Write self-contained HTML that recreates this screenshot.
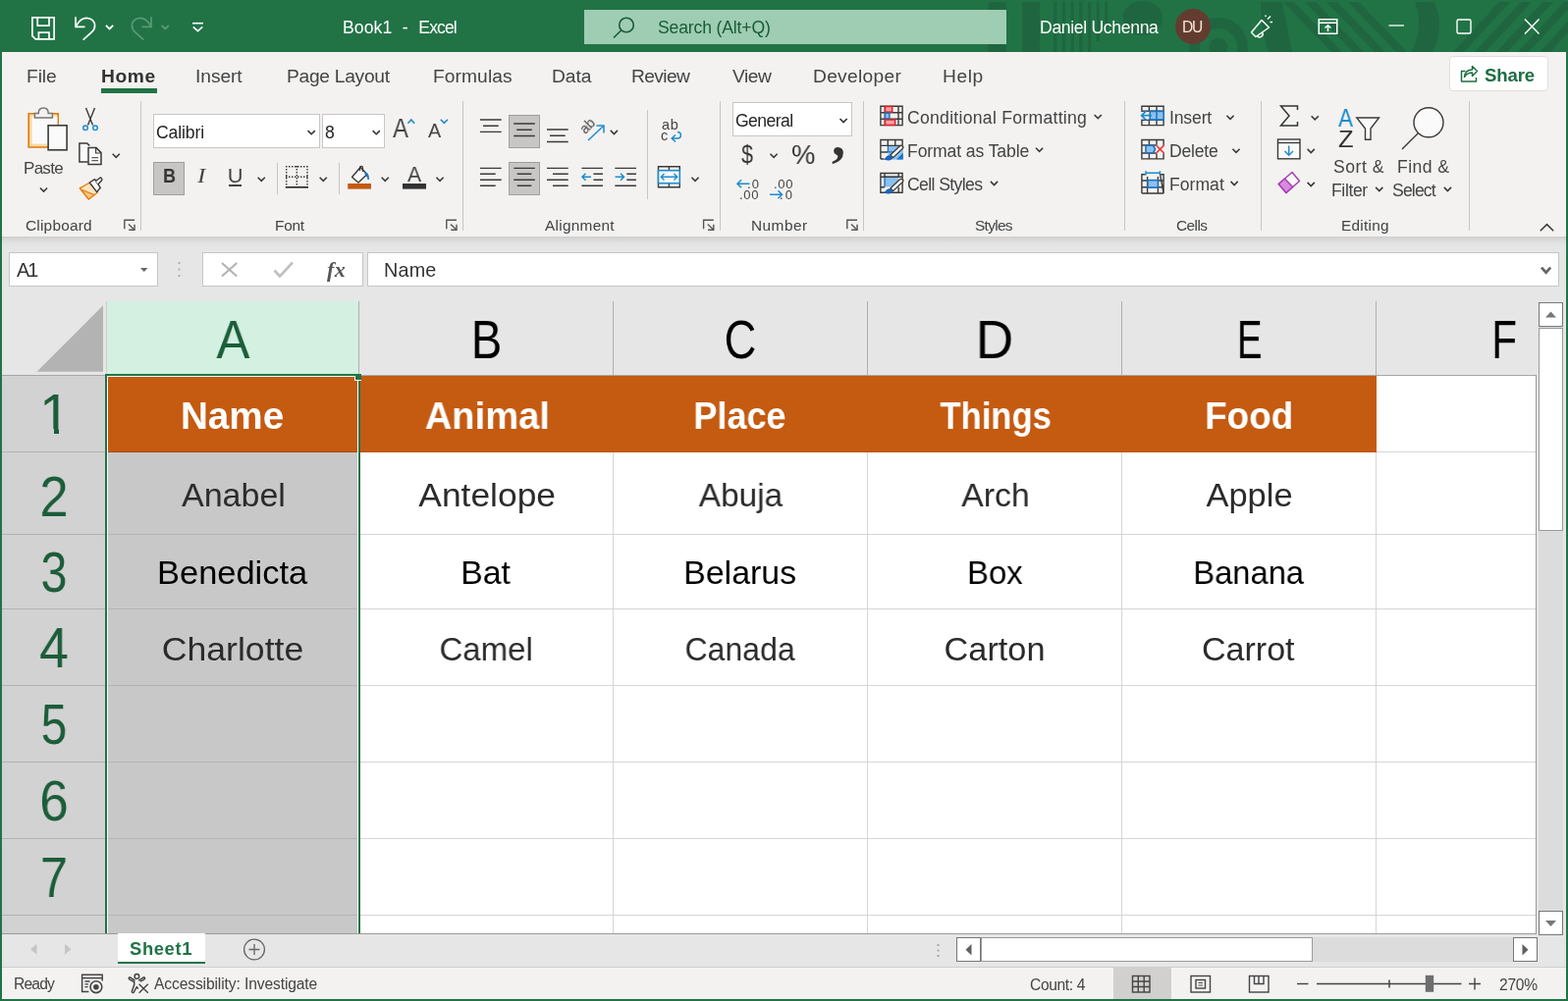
<!DOCTYPE html>
<html lang="en"><head><meta charset="utf-8"><title>Book1 - Excel</title>
<style>
html,body{margin:0;padding:0;}
body{width:1597px;height:1020px;overflow:hidden;position:relative;background:#fff;font-family:"Liberation Sans",sans-serif;}
#app{position:absolute;left:0;top:0;width:1597px;height:1020px;overflow:hidden;}
.b{position:absolute;}
.t{position:absolute;white-space:nowrap;display:block;will-change:transform;}
#icons{position:absolute;left:0;top:0;width:1597px;height:1020px;pointer-events:none;}
</style></head>
<body>
<div id="app">
<!-- part_title -->
<div class="b titlebar" style="left:0px;top:0px;width:1597px;height:53px;background:#217346;"></div>
<svg class="b" style="left:0;top:0" width="1597" height="53" viewBox="0 0 1597 53"><rect x="1006.5" y="2" width="18.5" height="51" fill="#1f6640"/><rect x="1041" y="2" width="18" height="51" fill="#1f6640"/><rect x="1073.1" y="2" width="3.4" height="51" fill="#1f6640"/><rect x="1081.8" y="2" width="3.4" height="51" fill="#1f6640"/><rect x="1090.5" y="2" width="3.4" height="51" fill="#1f6640"/><rect x="1099.2" y="2" width="3.4" height="51" fill="#1f6640"/><rect x="1107.9" y="2" width="3.4" height="51" fill="#1f6640"/><rect x="1116.6" y="2" width="3.3" height="40" fill="#1f6640"/><rect x="1125" y="2" width="3.3" height="31" fill="#1f6640"/><ellipse cx="1163.8" cy="18.5" rx="20.4" ry="17.5" fill="#1f6640"/><circle cx="1241" cy="48" r="24.5" fill="none" stroke="#1f6640" stroke-width="11"/><circle cx="1241" cy="48" r="9.5" fill="#1f6640"/><path d="M1284 2 H1306 L1316 53 H1292 C1286 38 1284 20 1284 2Z" fill="#1f6640"/><path d="M1307 2 L1318 2 L1367 53 L1356 53 Z" fill="#1f6640"/><path d="M1329 2 L1340 2 L1389 53 L1378 53 Z" fill="#1f6640"/><path d="M1351 2 L1362 2 L1411 53 L1400 53 Z" fill="#1f6640"/><path d="M1373 2 L1384 2 L1433 53 L1422 53 Z" fill="#1f6640"/><path d="M1441 2 C1447 18 1447 36 1437 53 L1459 53 C1468 36 1468 18 1461 2 Z" fill="#1f6640"/><path d="M1480 53 L1491 53 L1538 2 L1527 2 Z" fill="#1f6640"/><path d="M1502 53 L1513 53 L1560 2 L1549 2 Z" fill="#1f6640"/><path d="M1524 53 L1535 53 L1582 2 L1571 2 Z" fill="#1f6640"/><path d="M1546 53 L1557 53 L1604 2 L1593 2 Z" fill="#1f6640"/><path d="M1568 53 L1579 53 L1626 2 L1615 2 Z" fill="#1f6640"/></svg>
<div class="b search" style="left:595px;top:10px;width:430px;height:35px;background:#9fcdb3;"></div>
<span class="t" style="left:348.96px;top:16px;font-size:17.6px;line-height:24px;letter-spacing:0.1px;word-spacing:0.25px;white-space:pre;color:#fff;">Book1  -  <span style="letter-spacing:-0.9px;">Excel</span></span>
<span class="t" style="left:669.7px;top:16px;font-size:17.6px;line-height:24px;letter-spacing:-0.16px;color:#185c37;">Search (Alt+Q)</span>
<span class="t" style="left:1058.96px;top:16px;font-size:17.6px;line-height:24px;letter-spacing:-0.33px;color:#fff;">Daniel Uchenna</span>
<div class="b avatar" style="left:1197px;top:9px;width:36px;height:36px;background:#633c30;border-radius:50%;"></div>
<span class="t" style="left:1204.22px;top:17px;font-size:15.6px;line-height:21px;letter-spacing:-1.15px;color:#f5e6d8;">DU</span>
<!-- part_tabs -->
<div class="b ribbon" style="left:0px;top:53px;width:1597px;height:188px;background:#f3f2f1;"></div>
<span class="t tab" style="left:26.73px;top:65px;font-size:19.2px;line-height:25px;letter-spacing:-0.06px;color:#444;">File</span>
<span class="t tab" style="left:103.42px;top:65px;font-size:19.2px;line-height:25px;letter-spacing:0.61px;color:#333;font-weight:bold;">Home</span>
<span class="t tab" style="left:199.43px;top:65px;font-size:19.2px;line-height:25px;letter-spacing:-0.06px;color:#444;">Insert</span>
<span class="t tab" style="left:291.82px;top:65px;font-size:19.2px;line-height:25px;letter-spacing:-0.27px;color:#444;">Page Layout</span>
<span class="t tab" style="left:440.52px;top:65px;font-size:19.2px;line-height:25px;letter-spacing:0.09px;color:#444;">Formulas</span>
<span class="t tab" style="left:561.73px;top:65px;font-size:19.2px;line-height:25px;letter-spacing:-0.05px;color:#444;">Data</span>
<span class="t tab" style="left:642.92px;top:65px;font-size:19.2px;line-height:25px;letter-spacing:-0.6px;color:#444;">Review</span>
<span class="t tab" style="left:746.12px;top:65px;font-size:19.2px;line-height:25px;letter-spacing:-0.47px;color:#444;">View</span>
<span class="t tab" style="left:827.62px;top:65px;font-size:19.2px;line-height:25px;letter-spacing:0.29px;color:#444;">Developer</span>
<span class="t tab" style="left:959.73px;top:65px;font-size:19.2px;line-height:25px;letter-spacing:0.6px;color:#444;">Help</span>
<div class="b tabline" style="left:103px;top:90px;width:57px;height:5px;background:#217346;"></div>
<div class="b share" style="left:1476px;top:57px;width:101px;height:36px;background:#fff;border:1px solid #e1dfdd;border-radius:4px;box-sizing:border-box;"></div>
<span class="t" style="left:1511.96px;top:64px;font-size:18.6px;line-height:25px;letter-spacing:-0.15px;color:#1e6e42;font-weight:bold;">Share</span>
<!-- part_ribbon1 -->
<div class="b sep" style="left:143px;top:103px;width:1px;height:132px;background:#c8c6c4;"></div>
<div class="b sep" style="left:471px;top:103px;width:1px;height:132px;background:#c8c6c4;"></div>
<div class="b sep" style="left:733px;top:103px;width:1px;height:132px;background:#c8c6c4;"></div>
<div class="b sep" style="left:879px;top:103px;width:1px;height:132px;background:#c8c6c4;"></div>
<div class="b sep" style="left:1145px;top:103px;width:1px;height:132px;background:#c8c6c4;"></div>
<div class="b sep" style="left:1284px;top:103px;width:1px;height:132px;background:#c8c6c4;"></div>
<div class="b sep" style="left:1496px;top:103px;width:1px;height:132px;background:#c8c6c4;"></div>
<span class="t glabel" style="left:26.22px;top:219px;font-size:15.4px;line-height:21px;letter-spacing:0.22px;color:#444;">Clipboard</span>
<span class="t glabel" style="left:280.44px;top:219px;font-size:15.4px;line-height:21px;letter-spacing:-0.24px;color:#444;">Font</span>
<span class="t glabel" style="left:555.17px;top:219px;font-size:15.4px;line-height:21px;letter-spacing:0.27px;color:#444;">Alignment</span>
<span class="t glabel" style="left:765.04px;top:219px;font-size:15.4px;line-height:21px;letter-spacing:0.47px;color:#444;">Number</span>
<span class="t glabel" style="left:992.5px;top:219px;font-size:15.4px;line-height:21px;letter-spacing:-0.69px;color:#444;">Styles</span>
<span class="t glabel" style="left:1198.12px;top:219px;font-size:15.4px;line-height:21px;letter-spacing:-0.55px;color:#444;">Cells</span>
<span class="t glabel" style="left:1365.74px;top:219px;font-size:15.4px;line-height:21px;letter-spacing:0.27px;color:#444;">Editing</span>
<span class="t" style="left:24.31px;top:160px;font-size:17px;line-height:23px;letter-spacing:-0.71px;color:#444;">Paste</span>
<div class="b combo" style="left:156px;top:116px;width:170px;height:35px;background:#fff;border:1px solid #c8c6c4;box-sizing:border-box;"></div>
<div class="b combo" style="left:328px;top:116px;width:64px;height:35px;background:#fff;border:1px solid #c8c6c4;box-sizing:border-box;"></div>
<span class="t" style="left:159.11px;top:123px;font-size:17.6px;line-height:24px;letter-spacing:-0.13px;color:#262626;">Calibri</span>
<span class="t" style="left:330.94px;top:123px;font-size:17.6px;line-height:24px;color:#262626;">8</span>
<span class="t" style="left:399.65px;top:114px;font-size:27px;line-height:34px;transform:scaleX(0.888);transform-origin:0.05px 50%;color:#444;">A</span>
<span class="t" style="left:435.86px;top:120px;font-size:20px;line-height:26px;transform:scaleX(0.988);transform-origin:0.04px 50%;color:#444;">A</span>
<div class="b sel" style="left:156px;top:165.3px;width:32px;height:33.4px;background:#c8c6c4;border:1px solid #a19f9d;box-sizing:border-box;"></div>
<span class="t" style="left:165.5px;top:166px;font-size:19.4px;line-height:26px;transform:scaleX(0.921);transform-origin:1.3px 50%;color:#333;font-weight:bold;">B</span>
<span class="t" style="left:201.48px;top:165px;font-size:21px;line-height:28px;transform:scaleX(1.190);transform-origin:-0.08px 50%;color:#444;font-style:italic;font-family:'Liberation Serif',serif;">I</span>
<span class="t" style="left:231.6px;top:166px;font-size:19.4px;line-height:26px;transform:scaleX(1.125);transform-origin:1.5px 50%;color:#444;">U</span>
<div class="b" style="left:232.5px;top:188.2px;width:13.5px;height:1.5px;background:#444;"></div>
<div class="b sep" style="left:282px;top:166px;width:1px;height:32px;background:#c8c6c4;"></div>
<div class="b sep" style="left:345px;top:166px;width:1px;height:32px;background:#c8c6c4;"></div>
<span class="t" style="left:415.26px;top:162px;font-size:22.8px;line-height:30px;transform:scaleX(0.925);transform-origin:0.04px 50%;color:#444;">A</span>
<div class="b sel" style="left:518px;top:117.3px;width:32px;height:33.4px;background:#c8c6c4;border:1px solid #a19f9d;box-sizing:border-box;"></div>
<div class="b sel" style="left:518px;top:165.3px;width:32px;height:33.4px;background:#c8c6c4;border:1px solid #a19f9d;box-sizing:border-box;"></div>
<span class="t" style="left:587px;top:128px;font-size:14px;line-height:16px;color:#444;transform:rotate(-45deg);transform-origin:0 0;">ab</span>
<div class="b sep" style="left:659px;top:112px;width:1px;height:91px;background:#c8c6c4;"></div>
<span class="t" style="left:674.08px;top:117px;font-size:14.5px;line-height:20px;letter-spacing:0.78px;color:#444;">ab</span>
<span class="t" style="left:673.38px;top:128px;font-size:14.5px;line-height:20px;color:#444;">c</span>
<!-- part_ribbon2 -->
<div class="b combo" style="left:746.3px;top:104px;width:121.7px;height:34.5px;background:#fff;border:1px solid #c8c6c4;box-sizing:border-box;"></div>
<span class="t" style="left:749.01px;top:111px;font-size:17.6px;line-height:24px;letter-spacing:-0.56px;color:#262626;">General</span>
<span class="t" style="left:755.22px;top:140px;font-size:26px;line-height:34px;transform:scaleX(0.821);transform-origin:0.28px 50%;color:#333;">$</span>
<span class="t" style="left:805.58px;top:139px;font-size:28.5px;line-height:36px;transform:scaleX(0.961);transform-origin:1.02px 50%;color:#333;">%</span>
<span class="t" style="left:846.86px;top:106px;font-size:56px;line-height:66px;color:#333;font-weight:bold;font-family:'Liberation Serif',serif;">,</span>
<span class="t" style="left:761.01px;top:178px;font-size:13px;line-height:19px;letter-spacing:1.05px;color:#444;">.0</span>
<span class="t" style="left:753.01px;top:189px;font-size:13px;line-height:19px;letter-spacing:0.66px;color:#444;">.00</span>
<span class="t" style="left:787.51px;top:178px;font-size:13px;line-height:19px;letter-spacing:0.66px;color:#444;">.00</span>
<span class="t" style="left:794.01px;top:189px;font-size:13px;line-height:19px;letter-spacing:2.05px;color:#444;">.0</span>
<span class="t" style="left:924.41px;top:108px;font-size:17.6px;line-height:24px;letter-spacing:0.28px;color:#444;">Conditional Formatting</span>
<span class="t" style="left:923.86px;top:142px;font-size:17.6px;line-height:24px;letter-spacing:-0.11px;color:#444;">Format as Table</span>
<span class="t" style="left:924.41px;top:176px;font-size:17.6px;line-height:24px;letter-spacing:-0.6px;color:#444;">Cell Styles</span>
<span class="t" style="left:1190.58px;top:108px;font-size:17.6px;line-height:24px;letter-spacing:-0.15px;color:#444;">Insert</span>
<span class="t" style="left:1190.76px;top:142px;font-size:17.6px;line-height:24px;letter-spacing:-0.23px;color:#444;">Delete</span>
<span class="t" style="left:1190.76px;top:176px;font-size:17.6px;line-height:24px;letter-spacing:0.01px;color:#444;">Format</span>
<span class="t" style="left:1362.95px;top:104px;font-size:25.5px;line-height:32px;transform:scaleX(0.887);transform-origin:0.05px 50%;color:#1e8bcd;">A</span>
<span class="t" style="left:1362.72px;top:126px;font-size:24.5px;line-height:31px;transform:scaleX(1.043);transform-origin:0.78px 50%;color:#333;">Z</span>
<span class="t" style="left:1358.3px;top:158px;font-size:17.6px;line-height:24px;letter-spacing:0.5px;color:#444;">Sort &amp;</span>
<span class="t" style="left:1356.26px;top:182px;font-size:17.6px;line-height:24px;letter-spacing:-0.39px;color:#444;">Filter</span>
<span class="t" style="left:1422.76px;top:158px;font-size:17.6px;line-height:24px;letter-spacing:0.43px;color:#444;">Find &amp;</span>
<span class="t" style="left:1418.4px;top:182px;font-size:17.6px;line-height:24px;letter-spacing:-0.84px;color:#444;">Select</span>
<!-- part_grid -->
<div class="b fbar" style="left:0px;top:241px;width:1597px;height:66px;background:#e6e6e6;"></div>
<div class="b shadow" style="left:0px;top:241px;width:1597px;height:10px;background:linear-gradient(#cfcfcf,#dadada 35%,#e3e3e3 70%,#e6e6e6);"></div>
<div class="b namebox" style="left:9px;top:257px;width:152px;height:35px;background:#fff;border:1px solid #c6c6c6;box-sizing:border-box;"></div>
<span class="t" style="left:17.16px;top:262px;font-size:19.8px;line-height:26px;letter-spacing:-2px;color:#333;">A1</span>
<div class="b fxbox" style="left:206px;top:257px;width:164px;height:35px;background:#fff;border:1px solid #c6c6c6;box-sizing:border-box;"></div>
<span class="t" style="left:332.7px;top:260px;font-size:22px;line-height:29px;letter-spacing:0.41px;color:#555;font-weight:bold;font-style:italic;font-family:'Liberation Serif',serif;">fx</span>
<div class="b finput" style="left:374px;top:257px;width:1214px;height:35px;background:#fff;border:1px solid #c6c6c6;box-sizing:border-box;"></div>
<span class="t" style="left:391.28px;top:262px;font-size:19.8px;line-height:26px;letter-spacing:0.17px;color:#333;">Name</span>
<div class="b grid" style="left:2px;top:307px;width:1563px;height:645px;background:#fff;"></div>
<div class="b colhdr" style="left:2px;top:307px;width:1563px;height:75px;background:#e6e6e6;"></div>
<div class="b colsel" style="left:109px;top:307px;width:256px;height:74px;background:#d3f0e0;"></div>
<div class="b" style="left:2px;top:382px;width:1563px;height:1px;background:#a6a6a6;"></div>
<div class="b" style="left:365px;top:307px;width:1px;height:75px;background:#b0b0b0;"></div>
<div class="b" style="left:624px;top:307px;width:1px;height:75px;background:#b0b0b0;"></div>
<div class="b" style="left:883px;top:307px;width:1px;height:75px;background:#b0b0b0;"></div>
<div class="b" style="left:1142px;top:307px;width:1px;height:75px;background:#b0b0b0;"></div>
<div class="b" style="left:1401px;top:307px;width:1px;height:75px;background:#b0b0b0;"></div>
<div class="b" style="left:108px;top:307px;width:1px;height:75px;background:#cfcfcf;"></div>
<div class="b rowhdr" style="left:2px;top:383px;width:105px;height:568px;background:#d2d2d2;"></div>
<div class="b" style="left:2px;top:460px;width:105px;height:1px;background:#b2b2b2;"></div>
<div class="b" style="left:2px;top:544px;width:105px;height:1px;background:#b2b2b2;"></div>
<div class="b" style="left:2px;top:620px;width:105px;height:1px;background:#b2b2b2;"></div>
<div class="b" style="left:2px;top:698px;width:105px;height:1px;background:#b2b2b2;"></div>
<div class="b" style="left:2px;top:776px;width:105px;height:1px;background:#b2b2b2;"></div>
<div class="b" style="left:2px;top:854px;width:105px;height:1px;background:#b2b2b2;"></div>
<div class="b" style="left:2px;top:932px;width:105px;height:1px;background:#b2b2b2;"></div>
<div class="b orange" style="left:109px;top:383px;width:1293px;height:78px;background:#c55a11;"></div>
<div class="b" style="left:109px;top:460px;width:1293px;height:1px;background:#bd540d;"></div>
<div class="b" style="left:110px;top:460px;width:254px;height:1px;background:#a84806;"></div>
<div class="b selcol" style="left:109px;top:461px;width:256px;height:490px;background:#c8c8c8;"></div>
<div class="b" style="left:367px;top:544px;width:1197px;height:1px;background:#d6d6d6;"></div>
<div class="b" style="left:110px;top:544px;width:254px;height:1px;background:#b4b4b4;"></div>
<div class="b" style="left:367px;top:620px;width:1197px;height:1px;background:#d6d6d6;"></div>
<div class="b" style="left:110px;top:620px;width:254px;height:1px;background:#b4b4b4;"></div>
<div class="b" style="left:367px;top:698px;width:1197px;height:1px;background:#d6d6d6;"></div>
<div class="b" style="left:110px;top:698px;width:254px;height:1px;background:#b4b4b4;"></div>
<div class="b" style="left:367px;top:776px;width:1197px;height:1px;background:#d6d6d6;"></div>
<div class="b" style="left:110px;top:776px;width:254px;height:1px;background:#b4b4b4;"></div>
<div class="b" style="left:367px;top:854px;width:1197px;height:1px;background:#d6d6d6;"></div>
<div class="b" style="left:110px;top:854px;width:254px;height:1px;background:#b4b4b4;"></div>
<div class="b" style="left:367px;top:932px;width:1197px;height:1px;background:#d6d6d6;"></div>
<div class="b" style="left:110px;top:932px;width:254px;height:1px;background:#b4b4b4;"></div>
<div class="b" style="left:624px;top:461px;width:1px;height:490px;background:#d6d6d6;"></div>
<div class="b" style="left:883px;top:461px;width:1px;height:490px;background:#d6d6d6;"></div>
<div class="b" style="left:1142px;top:461px;width:1px;height:490px;background:#d6d6d6;"></div>
<div class="b" style="left:1401px;top:461px;width:1px;height:490px;background:#d6d6d6;"></div>
<div class="b" style="left:1402px;top:460px;width:162px;height:1px;background:#d6d6d6;"></div>
<div class="b" style="left:1564px;top:382px;width:1px;height:570px;background:#9a9a9a;"></div>
<div class="b" style="left:107px;top:381px;width:2px;height:570px;background:#217346;"></div>
<div class="b" style="left:365px;top:381px;width:2px;height:570px;background:#217346;"></div>
<div class="b" style="left:107px;top:381px;width:260px;height:2px;background:#217346;"></div>
<div class="b" style="left:109px;top:383px;width:256px;height:1px;background:#fff;"></div>
<div class="b" style="left:109px;top:383px;width:1px;height:568px;background:#fff;"></div>
<div class="b" style="left:364px;top:383px;width:1px;height:568px;background:#fff;"></div>
<div class="b" style="left:361px;top:381px;width:7px;height:7px;background:#fff;"></div>
<div class="b" style="left:362px;top:381px;width:6px;height:6px;background:#217346;"></div>
<div class="b" style="left:361px;top:381px;width:1px;height:2px;background:#217346;"></div>
<span class="t" style="left:218.99px;top:313px;font-size:55.2px;line-height:66px;transform:scaleX(0.9236);transform-origin:18.41px 50%;color:#1c5d3a;">A</span>
<span class="t" style="left:477.49px;top:313px;font-size:55.2px;line-height:66px;transform:scaleX(0.8511);transform-origin:19.21px 50%;color:#000;">B</span>
<span class="t" style="left:734.42px;top:313px;font-size:55.2px;line-height:66px;transform:scaleX(0.8182);transform-origin:20.28px 50%;color:#000;">C</span>
<span class="t" style="left:993.38px;top:313px;font-size:55.2px;line-height:66px;transform:scaleX(0.9636);transform-origin:20.87px 50%;color:#000;">D</span>
<span class="t" style="left:1254.32px;top:313px;font-size:55.2px;line-height:66px;transform:scaleX(0.6954);transform-origin:19.48px 50%;color:#000;">E</span>
<span class="t" style="left:1514.53px;top:313px;font-size:55.2px;line-height:66px;transform:scaleX(0.7598);transform-origin:18.02px 50%;color:#000;">F</span>
<span class="t" style="left:40.47px;top:388px;font-size:57px;line-height:68px;transform:scaleX(1.0000);transform-origin:16.63px 50%;color:#1c5d3a;">1</span>
<div class="b" style="left:44px;top:437px;width:11px;height:6px;background:#d2d2d2;"></div>
<div class="b" style="left:60.4px;top:437px;width:11.6px;height:6px;background:#d2d2d2;"></div>
<span class="t" style="left:38.61px;top:472px;font-size:57.5px;line-height:68px;transform:scaleX(0.9084);transform-origin:15.99px 50%;color:#1c5d3a;">2</span>
<span class="t" style="left:39.08px;top:549px;font-size:57.5px;line-height:68px;transform:scaleX(0.8362);transform-origin:15.82px 50%;color:#1c5d3a;">3</span>
<span class="t" style="left:38.69px;top:626px;font-size:57.5px;line-height:68px;transform:scaleX(0.9317);transform-origin:15.81px 50%;color:#1c5d3a;">4</span>
<span class="t" style="left:39.31px;top:704px;font-size:57.5px;line-height:68px;transform:scaleX(0.8252);transform-origin:15.94px 50%;color:#1c5d3a;">5</span>
<span class="t" style="left:39.06px;top:782px;font-size:57.5px;line-height:68px;transform:scaleX(0.9232);transform-origin:16.19px 50%;color:#1c5d3a;">6</span>
<span class="t" style="left:38.98px;top:860px;font-size:57.5px;line-height:68px;transform:scaleX(0.8797);transform-origin:16.02px 50%;color:#1c5d3a;">7</span>
<span class="t" style="left:183.73px;top:400px;font-size:38.6px;line-height:47px;transform:scaleX(1.0022);transform-origin:53.17px 50%;color:#fff;font-weight:bold;">Name</span>
<span class="t" style="left:431.62px;top:400px;font-size:38.6px;line-height:47px;transform:scaleX(0.9885);transform-origin:63.43px 50%;color:#fff;font-weight:bold;">Animal</span>
<span class="t" style="left:703.4px;top:400px;font-size:38.6px;line-height:47px;transform:scaleX(0.9337);transform-origin:51.05px 50%;color:#fff;font-weight:bold;">Place</span>
<span class="t" style="left:950.51px;top:400px;font-size:38.6px;line-height:47px;transform:scaleX(0.8962);transform-origin:62.64px 50%;color:#fff;font-weight:bold;">Things</span>
<span class="t" style="left:1225.35px;top:400px;font-size:38.6px;line-height:47px;transform:scaleX(0.9536);transform-origin:47.15px 50%;color:#fff;font-weight:bold;">Food</span>
<span class="t" style="left:184.62px;top:483px;font-size:34px;line-height:42px;transform:scaleX(0.9997);transform-origin:51.83px 50%;color:#2b2b2b;">Anabel</span>
<span class="t" style="left:428.55px;top:483px;font-size:34px;line-height:42px;transform:scaleX(1.0410);transform-origin:66.4px 50%;color:#2b2b2b;">Antelope</span>
<span class="t" style="left:710.68px;top:483px;font-size:34px;line-height:42px;transform:scaleX(0.9827);transform-origin:43.52px 50%;color:#2b2b2b;">Abuja</span>
<span class="t" style="left:979.11px;top:483px;font-size:34px;line-height:42px;transform:scaleX(0.9934);transform-origin:33.89px 50%;color:#2b2b2b;">Arch</span>
<span class="t" style="left:1228.99px;top:483px;font-size:34px;line-height:42px;transform:scaleX(1.0130);transform-origin:42.76px 50%;color:#2b2b2b;">Apple</span>
<span class="t" style="left:160.64px;top:562px;font-size:34px;line-height:42px;transform:scaleX(1.0125);transform-origin:77.01px 50%;color:#000;">Benedicta</span>
<span class="t" style="left:468.56px;top:562px;font-size:34px;line-height:42px;transform:scaleX(0.9936);transform-origin:26.79px 50%;color:#000;">Bat</span>
<span class="t" style="left:696.28px;top:562px;font-size:34px;line-height:42px;transform:scaleX(0.9976);transform-origin:58.42px 50%;color:#000;">Belarus</span>
<span class="t" style="left:983.69px;top:562px;font-size:34px;line-height:42px;transform:scaleX(0.9668);transform-origin:30.51px 50%;color:#000;">Box</span>
<span class="t" style="left:1212.64px;top:562px;font-size:34px;line-height:42px;transform:scaleX(0.9620);transform-origin:60.01px 50%;color:#000;">Banana</span>
<span class="t" style="left:168.36px;top:640px;font-size:34px;line-height:42px;transform:scaleX(1.0473);transform-origin:69.09px 50%;color:#2b2b2b;">Charlotte</span>
<span class="t" style="left:446.15px;top:640px;font-size:34px;line-height:42px;transform:scaleX(0.9698);transform-origin:48.85px 50%;color:#2b2b2b;">Camel</span>
<span class="t" style="left:693.73px;top:640px;font-size:34px;line-height:42px;transform:scaleX(0.9414);transform-origin:60.42px 50%;color:#2b2b2b;">Canada</span>
<span class="t" style="left:961.96px;top:640px;font-size:34px;line-height:42px;transform:scaleX(1.0079);transform-origin:50.79px 50%;color:#2b2b2b;">Carton</span>
<span class="t" style="left:1224.48px;top:640px;font-size:34px;line-height:42px;transform:scaleX(1.0022);transform-origin:47.97px 50%;color:#2b2b2b;">Carrot</span>
<!-- part_status -->
<div class="b tabbar" style="left:0px;top:952px;width:1597px;height:34px;background:#e6e6e6;"></div>
<div class="b" style="left:2px;top:951px;width:1563px;height:1px;background:#9a9a9a;"></div>
<div class="b" style="left:0px;top:985px;width:1597px;height:1px;background:#cfcfcf;"></div>
<div class="b status" style="left:0px;top:986px;width:1597px;height:34px;background:#f3f2f1;"></div>
<div class="b vscroll" style="left:1565px;top:300px;width:30px;height:655px;background:#e6e6e6;"></div>
<div class="b" style="left:1567px;top:333px;width:25px;height:595px;background:#dcdcdc;"></div>
<div class="b" style="left:1567px;top:308px;width:25px;height:25px;background:#fff;border:1px solid #777;box-sizing:border-box;"></div>
<div class="b" style="left:1567px;top:928px;width:25px;height:25px;background:#fff;border:1px solid #777;box-sizing:border-box;"></div>
<div class="b" style="left:1567px;top:334px;width:25px;height:207px;background:#fff;border:1px solid #9a9a9a;box-sizing:border-box;"></div>
<div class="b sheettab" style="left:120px;top:951px;width:89px;height:29px;background:#fff;"></div>
<div class="b" style="left:120px;top:980px;width:89px;height:2px;background:#217346;"></div>
<span class="t" style="left:131.97px;top:954px;font-size:18.4px;line-height:25px;letter-spacing:0.63px;color:#217346;font-weight:bold;">Sheet1</span>
<div class="b" style="left:974px;top:955px;width:592px;height:25px;background:#dcdcdc;"></div>
<div class="b" style="left:974px;top:955px;width:25px;height:25px;background:#fff;border:1px solid #777;box-sizing:border-box;"></div>
<div class="b" style="left:999px;top:955px;width:338px;height:25px;background:#fff;border:1px solid #9a9a9a;box-sizing:border-box;"></div>
<div class="b" style="left:1541px;top:955px;width:25px;height:25px;background:#fff;border:1px solid #777;box-sizing:border-box;"></div>
<span class="t" style="left:13.62px;top:992px;font-size:15.6px;line-height:21px;letter-spacing:-0.82px;color:#444;">Ready</span>
<span class="t" style="left:157.27px;top:992px;font-size:15.6px;line-height:21px;letter-spacing:-0.11px;color:#444;">Accessibility: Investigate</span>
<span class="t" style="left:1049.41px;top:993px;font-size:15.6px;line-height:21px;letter-spacing:-0.36px;color:#444;">Count: 4</span>
<div class="b viewsel" style="left:1133.5px;top:986px;width:59.5px;height:32px;background:#d2d0ce;"></div>
<span class="t" style="left:1527.42px;top:993px;font-size:15.6px;line-height:21px;letter-spacing:-0.28px;color:#444;">270%</span>
<div class="b" style="left:0px;top:53px;width:2px;height:967px;background:#217346;"></div>
<div class="b" style="left:1595px;top:53px;width:2px;height:967px;background:#217346;"></div>
<div class="b" style="left:0px;top:1018px;width:1597px;height:2px;background:#217346;"></div>
<svg id="icons" width="1597" height="1020" viewBox="0 0 1597 1020">
<defs><clipPath id="tbclip"><rect x="0" y="0" width="1597" height="53"/></clipPath></defs>
<!-- part_title -->
<g fill="none" stroke="#fff" stroke-width="1.7"><path d="M32.9 17.9H55.1V39.9H36.2L32.9 36.6Z"/><path d="M38.2 17.9V26.2H50V17.9"/><path d="M39.4 39.9V33.2H50V39.9"/></g>
<g fill="none" stroke="#fff" stroke-width="1.7"><path d="M77 17.2V27.4H86.5"/><path d="M77.6 26.6C80 21.5 83.8 18.3 88.3 18.3C93.2 18.3 96.6 21.8 96.6 26.2C96.6 29 95.4 31 93 33.2L84.6 40.6"/></g>
<path d="M107.95 25.8L111.55 29.4L115.15 25.8" fill="none" stroke="#fff" stroke-width="1.8"/>
<g fill="none" stroke="#5a9a78" stroke-width="1.7"><path d="M154 17.2V27.4H144.5"/><path d="M153.4 26.6C151 21.5 147.2 18.3 142.7 18.3C137.8 18.3 134.4 21.8 134.4 26.2C134.4 29 135.6 31 138 33.2L146.4 40.6"/></g>
<path d="M164.65 25.8L168.25 29.4L171.85 25.8" fill="none" stroke="#5a9a78" stroke-width="1.8"/>
<path d="M196 23.7H207" stroke="#fff" stroke-width="1.6"/>
<path d="M196.8 27.4L201.5 31.6L206.2 27.4" fill="none" stroke="#fff" stroke-width="1.7"/>
<g fill="none" stroke="#185c37" stroke-width="1.6"><circle cx="638" cy="25.5" r="7.3"/><path d="M632.8 30.8L625 38.5"/></g>
<g fill="none" stroke="#fff" stroke-width="1.5" stroke-linejoin="round"><path d="M1285 20.5L1292.5 28L1279 37.5L1274.5 33Z"/><path d="M1280.5 36.5A3 3 0 0 0 1285.5 33"/><path d="M1291 19.5L1294 16.5M1289 17V15.5M1293.5 22.5H1296"/></g>
<g fill="none" stroke="#fff" stroke-width="1.5"><rect x="1343.25" y="19.75" width="18.5" height="14.5"/><path d="M1343 23.25H1362"/><path d="M1352.5 32V26M1349.5 28.5L1352.5 25.8L1355.5 28.5"/></g>
<path d="M1414.5 26H1430" stroke="#fff" stroke-width="1.3"/>
<rect x="1484" y="20" width="14" height="14" rx="1.5" fill="none" stroke="#fff" stroke-width="1.4"/>
<path d="M1553 19.5L1567.5 34.5M1567.5 19.5L1553 34.5" stroke="#fff" stroke-width="1.4" fill="none"/>
<!-- part_tabs -->
<g fill="none" stroke="#1e6e42" stroke-width="1.5" stroke-linejoin="round"><path d="M1492.5 72.5H1488.5V83H1503.5V79"/><path d="M1491.5 78.5C1492 73.5 1495 71 1499.5 71V67.5L1504.5 72.5L1499.5 77.5V74C1496 74 1493.5 75.5 1491.5 78.5Z"/></g>
<!-- part_ribbon1 -->
<g fill="none" stroke="#555" stroke-width="1.4"><path d="M126.8 233.3V224.3H137"/><path d="M131 228.5L136.8 234.1"/><path d="M131.2 234.3H137V228.7"/></g>
<g fill="none" stroke="#555" stroke-width="1.4"><path d="M454.8 233.3V224.3H465"/><path d="M459 228.5L464.8 234.1"/><path d="M459.2 234.3H465V228.7"/></g>
<g fill="none" stroke="#555" stroke-width="1.4"><path d="M716.6 233.3V224.3H726.8"/><path d="M720.8 228.5L726.6 234.1"/><path d="M721 234.3H726.8V228.7"/></g>
<g fill="none" stroke="#555" stroke-width="1.4"><path d="M862.8 233.3V224.3H873"/><path d="M867 228.5L872.8 234.1"/><path d="M867.2 234.3H873V228.7"/></g>
<path d="M1568.8 235.3L1575.5 228.6L1582.2 235.3" fill="none" stroke="#3b3a39" stroke-width="1.5"/>
<g><path d="M29.2 115.8H59.2V150H29.2Z" fill="#fcdca4" stroke="#e3780c" stroke-width="1.6"/><path d="M32.6 118.6H58.4V146.6H32.6Z" fill="#fafafa"/><path d="M35.4 120V115.4H39.2C39.2 112 41 110 44.2 110C47.4 110 49.2 112 49.2 115.4H53.4V120Z" fill="#f3f2f1" stroke="#797775" stroke-width="1.5"/><rect x="49.1" y="127.8" width="19" height="25" fill="#fafafa" stroke="#3b3a39" stroke-width="1.6"/></g>
<path d="M40.9 191.5L44.5 195.1L48.1 191.5" fill="none" stroke="#3b3a39" stroke-width="1.6"/>
<g fill="none" stroke-width="1.4"><path d="M87.5 110L94.5 127.5M96.5 110L89.5 127.5" stroke="#3b3a39"/><circle cx="87" cy="130.2" r="2.3" stroke="#1e8bcd" stroke-width="1.5"/><circle cx="97" cy="130.2" r="2.3" stroke="#1e8bcd" stroke-width="1.5"/></g>
<g fill="#fafafa" stroke="#3b3a39" stroke-width="1.5"><path d="M89.5 165H80.9V145.9H88.6L91.2 148.4"/><path d="M90 150.6H98L103 155.6V167.6H90Z"/><path d="M97.6 150.8V156H102.8" fill="none" stroke-width="1.2"/><path d="M93.4 160.6H100M93.4 163.6H100" stroke="#605e5c" stroke-width="1.2"/></g>
<path d="M114.65 156.7L118.25 160.3L121.85 156.7" fill="none" stroke="#3b3a39" stroke-width="1.6"/>
<g stroke-width="1.4" stroke-linejoin="round"><path d="M81.2 191.8L91.5 186L99.5 196L90.3 203Z" fill="#fbe3c0" stroke="#e67e0e"/><path d="M83 193.3L96 198.6L90.3 203Z" fill="#f7c887" stroke="#e67e0e" stroke-width="1.2"/><path d="M91.2 186L96.5 182.7L102.3 191.3L98.6 195.6Z" fill="#f9f9f9" stroke="#3b3a39"/><path d="M97.5 184.5L101.8 181.2C103 180.5 104.6 182.8 103.6 183.8L100 187.8" fill="#f9f9f9" stroke="#3b3a39"/></g>
<path d="M313.55 133.1L317.15 136.7L320.75 133.1" fill="none" stroke="#333" stroke-width="1.6"/>
<path d="M379.65 133.1L383.25 136.7L386.85 133.1" fill="none" stroke="#333" stroke-width="1.6"/>
<path d="M415.4 125.8L418.8 122L422.2 125.8" fill="none" stroke="#1e8bcd" stroke-width="1.6"/>
<path d="M448.8 121.8L452.4 125.4L456 121.8" fill="none" stroke="#1e8bcd" stroke-width="1.6"/>
<path d="M262.65 180.7L266.25 184.3L269.85 180.7" fill="none" stroke="#3b3a39" stroke-width="1.6"/>
<g fill="none" stroke="#3b3a39"><path d="M291 169.7H313.5M291 180.3H313.5M291.7 169V190M302.3 169V190M313 169V190" stroke-width="1.4" stroke-dasharray="1.5 1.5"/><path d="M290.8 190.8H314" stroke-width="1.6" stroke="#222"/></g>
<path d="M325.65 180.7L329.25 184.3L332.85 180.7" fill="none" stroke="#3b3a39" stroke-width="1.6"/>
<g fill="none" stroke-linejoin="round"><path d="M358.5 180.5L367 170.5L374 177.5L365 186Z" stroke="#3b3a39" stroke-width="1.4" fill="#f9f9f9"/><path d="M366.5 174V171C366.5 169 369.5 169 369.5 171V175" stroke="#3b3a39" stroke-width="1.3"/><path d="M372 175.5C374.5 176.5 376 179.5 375.2 183C374.5 180.5 373.5 179 372 178Z" fill="#1e73be" stroke="#1e73be" stroke-width="1"/><rect x="354.2" y="187" width="23.8" height="5.6" fill="#c55a11"/></g>
<path d="M388.65 180.7L392.25 184.3L395.85 180.7" fill="none" stroke="#3b3a39" stroke-width="1.6"/>
<rect x="410" y="187" width="24" height="5.6" fill="#333"/>
<path d="M444.45 180.7L448.05 184.3L451.65 180.7" fill="none" stroke="#3b3a39" stroke-width="1.6"/>
<path d="M489 122H510.7M492 128.2H507.7M489 134.4H510.7" stroke="#3b3a39" stroke-width="1.4" fill="none"/>
<path d="M523.2 126H544.8M526.2 132.3H541.8M523.2 138.5H544.8" stroke="#3b3a39" stroke-width="1.4" fill="none"/>
<path d="M557 132H578.7M560 138.2H575.7M557 144.5H578.7" stroke="#3b3a39" stroke-width="1.4" fill="none"/>
<g fill="none" stroke="#1e8bcd" stroke-width="1.5"><path d="M599 143L614.5 128.5"/><path d="M607.5 128H615V135.5"/></g>
<path d="M621.8 132.9L625.4 136.5L629 132.9" fill="none" stroke="#3b3a39" stroke-width="1.6"/>
<path d="M489 171.4H510.7M489 177.2H504.7M489 183.2H510.7M489 189.2H504.7" stroke="#3b3a39" stroke-width="1.4" fill="none"/>
<path d="M523.2 171.4H544.8M526.7 177.2H541.3M523.2 183.2H544.8M526.7 189.2H541.3" stroke="#3b3a39" stroke-width="1.4" fill="none"/>
<path d="M557 171.4H578.7M563 177.2H578.7M557 183.2H578.7M563 189.2H578.7" stroke="#3b3a39" stroke-width="1.4" fill="none"/>
<path d="M592.4 171.4H614M604.4 177.2H614M604.4 183.2H614M592.4 189.2H614" stroke="#3b3a39" stroke-width="1.4" fill="none"/>
<path d="M593 180.2H602M596.5 176.7L593 180.2L596.5 183.7" fill="none" stroke="#1e8bcd" stroke-width="1.5"/>
<path d="M626.3 171.4H648M638.3 177.2H648M638.3 183.2H648M626.3 189.2H648" stroke="#3b3a39" stroke-width="1.4" fill="none"/>
<path d="M626.5 180.2H635.5M632 176.7L635.5 180.2L632 183.7" fill="none" stroke="#1e8bcd" stroke-width="1.5"/>
<path d="M690 134.5C694.5 134.5 694.5 141 690 141H684.5M688 137.5L684.2 141L688 144.5" fill="none" stroke="#1e8bcd" stroke-width="1.5"/>
<g fill="none"><path d="M670.5 169.7H692.3V190.8H670.5ZM681.4 169.7V173.5M681.4 187V190.8" stroke="#3b3a39" stroke-width="1.4"/><rect x="670.5" y="173.7" width="21.8" height="13" stroke="#1e8bcd" stroke-width="1.6" fill="#f9f9f9"/><path d="M673.5 180.2H689.5M676.5 177L673.3 180.2L676.5 183.4M686.5 177L689.7 180.2L686.5 183.4" stroke="#1e8bcd" stroke-width="1.4"/></g>
<path d="M704.4 180.7L708 184.3L711.6 180.7" fill="none" stroke="#3b3a39" stroke-width="1.6"/>
<!-- part_ribbon2 -->
<path d="M855.5 120.95L859.1 124.55L862.7 120.95" fill="none" stroke="#333" stroke-width="1.6"/>
<path d="M784.5 156.7L788.1 160.3L791.7 156.7" fill="none" stroke="#3b3a39" stroke-width="1.6"/>
<path d="M751 187.3H763.5M755 183.3L751 187.3L755 191.3" fill="none" stroke="#1e8bcd" stroke-width="1.5"/>
<path d="M784 198.3H796.5M792.5 194.3L796.5 198.3L792.5 202.3" fill="none" stroke="#1e8bcd" stroke-width="1.5"/>
<g><path d="M896.9 108.2H919.1V127.6H896.9ZM901.3 108.2V127.6M915 108.2V127.6M896.9 114.7H919.1M896.9 121.2H919.1" fill="none" stroke="#3b3a39" stroke-width="1.4"/><rect x="901.5" y="108.5" width="7.2" height="5.6" fill="#f8a0a8" stroke="#e02424" stroke-width="1.5"/><rect x="901.5" y="115.3" width="4.4" height="5.6" fill="#8cc0ee" stroke="#1e73be" stroke-width="1.5"/><rect x="901.5" y="122" width="10.2" height="5.4" fill="#f8a0a8" stroke="#e02424" stroke-width="1.5"/></g>
<path d="M1114.65 116.95L1118.25 120.55L1121.85 116.95" fill="none" stroke="#3b3a39" stroke-width="1.6"/>
<g><rect x="904.4" y="148.2" width="15.4" height="14.4" fill="#8cc0ee"/><path d="M913 162.6H919.8V155.8Z" fill="#1e73be"/><path d="M904.4 148.2V154.8H911" fill="none" stroke="#1e73be" stroke-width="1.3"/><path d="M896.9 162V142.5H919.1V148.2M896.9 148.4H919.1M896.9 155H904M904.3 142.5V148.2M911.8 142.5V148.2M896.9 162H900" fill="none" stroke="#3b3a39" stroke-width="1.4"/><path d="M919.4 149C918.6 148 917 148.2 916 149.2L906.8 158L909.6 160.6L919 151.8C920 150.8 920.2 149.8 919.4 149Z" fill="#fafafa" stroke="#3b3a39" stroke-width="1.3" stroke-linejoin="round"/><path d="M906.6 158.4C904.4 158 902.8 159.2 902 160.6C901.4 161.6 900.6 162 899.6 162C902 163.8 906.2 164 908.4 162.2C909.6 161.2 909.6 160.4 909.2 160.2Z" fill="#1e62b4"/></g>
<path d="M1055 150.7L1058.6 154.3L1062.2 150.7" fill="none" stroke="#3b3a39" stroke-width="1.6"/>
<g><rect x="901" y="180.4" width="14.2" height="10" fill="#8cc0ee"/><path d="M901 190.4V180.4H915" fill="none" stroke="#1e73be" stroke-width="1.4"/><path d="M896.9 176.5H919.1V196.2H896.9ZM896.9 180.2H919.1M901 176.5V180.2M915.2 176.5V180.2M896.9 190.8H901M915.2 190.8V196.2" fill="none" stroke="#3b3a39" stroke-width="1.4"/><path d="M919.4 183C918.6 182 917 182.2 916 183.2L906.8 192L909.6 194.6L919 185.8C920 184.8 920.2 183.8 919.4 183Z" fill="#fafafa" stroke="#3b3a39" stroke-width="1.3" stroke-linejoin="round"/><path d="M906.6 192.4C904.4 192 902.8 193.2 902 194.6C901.4 195.6 900.6 196 899.6 196C902 197.8 906.2 198 908.4 196.2C909.6 195.2 909.6 194.4 909.2 194.2Z" fill="#1e62b4"/></g>
<path d="M1008.9 184.9L1012.5 188.5L1016.1 184.9" fill="none" stroke="#3b3a39" stroke-width="1.6"/>
<g><path d="M1162.9 108.2H1185.1V127.6H1162.9ZM1170.4 108.2V127.6M1178 108.2V127.6M1162.9 113.2H1185.1M1162.9 122.2H1185.1" fill="none" stroke="#3b3a39" stroke-width="1.4"/><rect x="1162" y="113.9" width="9" height="7.6" fill="#f3f2f1"/><rect x="1171.2" y="113.4" width="14" height="8.6" fill="#8cc0ee" stroke="#1e73be" stroke-width="1.6"/><path d="M1178 113.4V122" stroke="#1e73be" stroke-width="1.5"/><path d="M1162.6 117.7H1173M1167.6 112.8L1162.6 117.7L1167.6 122.6" fill="none" stroke="#1e8bcd" stroke-width="1.7"/></g>
<path d="M1249.4 117.8L1253 121.4L1256.6 117.8" fill="none" stroke="#3b3a39" stroke-width="1.6"/>
<g><path d="M1162.9 142.5H1185.1V161.9H1162.9ZM1170.4 142.5V161.9M1178 142.5V161.9M1162.9 148H1185.1M1162.9 156H1185.1" fill="none" stroke="#3b3a39" stroke-width="1.4"/><circle cx="1181.4" cy="152" r="5.6" fill="#f3f2f1"/><path d="M1167 148.3H1174.6L1176.6 152L1174.6 155.7H1167Z" fill="#8cc0ee" stroke="#1e73be" stroke-width="1.6" stroke-linejoin="miter"/><path d="M1177.6 148.2L1185.4 156M1185.4 148.2L1177.6 156" fill="none" stroke="#e83a3a" stroke-width="1.7"/></g>
<path d="M1255.4 151.8L1259 155.4L1262.6 151.8" fill="none" stroke="#3b3a39" stroke-width="1.6"/>
<g><path d="M1162.9 197V177.8H1166.4M1181.6 177.8H1185.1V197ZM1162.9 184H1185.1M1162.9 190.8H1185.1M1168.6 180V197M1179.4 180V197M1162.9 197H1185.1" fill="none" stroke="#3b3a39" stroke-width="1.4"/><rect x="1169" y="183.6" width="10.4" height="7.4" fill="#8cc0ee" stroke="#1e73be" stroke-width="1.6"/><path d="M1167 176.2H1181.4M1167 174.2V178.4M1181.4 174.2V178.4" fill="none" stroke="#1e8bcd" stroke-width="1.5"/></g>
<path d="M1253.5 184.9L1257.1 188.5L1260.7 184.9" fill="none" stroke="#3b3a39" stroke-width="1.6"/>
<path d="M1321.5 112V108H1304.5L1313 118L1304.5 128H1321.5V124" fill="none" stroke="#333" stroke-width="1.5"/>
<path d="M1335.65 118.2L1339.25 121.8L1342.85 118.2" fill="none" stroke="#3b3a39" stroke-width="1.6"/>
<g fill="none"><rect x="1301.5" y="142" width="22.5" height="19.8" stroke="#3b3a39" stroke-width="1.4" fill="#fafafa"/><path d="M1301.5 145.5H1324" stroke="#3b3a39" stroke-width="1.4"/><path d="M1312.7 148.5V158M1308.5 154L1312.7 158.2L1317 154" stroke="#1e8bcd" stroke-width="1.5"/></g>
<path d="M1331.65 151.9L1335.25 155.5L1338.85 151.9" fill="none" stroke="#3b3a39" stroke-width="1.6"/>
<g stroke-linejoin="round"><path d="M1302.3 187.5L1316 175.5L1323.5 184.5L1310 196.5Z" fill="#fafafa" stroke="#a63fb0" stroke-width="1.5"/><path d="M1302.3 187.5L1308.5 182L1316.5 190.5L1310 196.5Z" fill="#d98ae0" stroke="#a63fb0" stroke-width="1.5"/></g>
<path d="M1331.65 185.9L1335.25 189.5L1338.85 185.9" fill="none" stroke="#3b3a39" stroke-width="1.6"/>
<path d="M1381.8 120H1404.5L1396 131V142.3H1390.5V131Z" fill="#fafafa" stroke="#3b3a39" stroke-width="1.4" stroke-linejoin="miter"/>
<path d="M1401.15 190.9L1404.75 194.5L1408.35 190.9" fill="none" stroke="#3b3a39" stroke-width="1.6"/>
<g fill="none" stroke="#3b3a39" stroke-width="1.4"><circle cx="1455" cy="124.8" r="15" fill="#fafafa"/><path d="M1444.3 135.8L1428 152"/></g>
<path d="M1470.8 190.9L1474.4 194.5L1478 190.9" fill="none" stroke="#3b3a39" stroke-width="1.6"/>
<!-- part_grid -->
<path d="M143 273H150.5L146.75 277Z" fill="#666"/>
<rect x="181.5" y="267" width="2" height="2" fill="#b0b0b0"/>
<rect x="181.5" y="273.5" width="2" height="2" fill="#b0b0b0"/>
<rect x="181.5" y="280" width="2" height="2" fill="#b0b0b0"/>
<path d="M226 268L241.2 281.6M241.2 268L226 281.6" stroke="#b2b2b2" stroke-width="2" fill="none"/>
<path d="M279.5 275.5L285 281.5L298 267.5" stroke="#c0c0c0" stroke-width="2.6" fill="none"/>
<path d="M1570 272.6L1574.6 277.6L1579.2 272.6" fill="none" stroke="#666" stroke-width="2.8"/>
<path d="M105 311.3V378.7H37.6Z" fill="#b3b3b3"/>
<!-- part_status -->
<path d="M1574 323.5L1579.5 317.5L1585 323.5Z" fill="#777"/>
<path d="M1574 938L1579.5 944L1585 938Z" fill="#777"/>
<path d="M37.5 961.8V972.8L31 967.3Z" fill="#c6c6c6"/>
<path d="M66 961.8V972.8L72.5 967.3Z" fill="#c6c6c6"/>
<g fill="none" stroke="#666" stroke-width="1.3"><circle cx="259" cy="967.5" r="10.4"/><path d="M253.5 967.5H264.5M259 962V973"/></g>
<rect x="954.5" y="962" width="2" height="2" fill="#a6a6a6"/>
<rect x="954.5" y="967.5" width="2" height="2" fill="#a6a6a6"/>
<rect x="954.5" y="973" width="2" height="2" fill="#a6a6a6"/>
<path d="M989.5 962V973.5L983.5 967.75Z" fill="#606060"/>
<path d="M1550.5 962V973.5L1556.5 967.75Z" fill="#606060"/>
<g fill="none" stroke="#444" stroke-width="1.5"><path d="M90.4 1010.4H83.6V993.2H104.2V999.4"/><path d="M84 996.6H104"/><path d="M86.4 1000H91.6M86.4 1002.8H90M86.4 1005.6H89.6" stroke-width="1.3"/><circle cx="97.9" cy="1005.7" r="5.9" stroke-width="1.6"/><circle cx="97.9" cy="1005.7" r="2.8" fill="#444" stroke="none"/></g>
<g fill="none" stroke="#444" stroke-width="1.5" stroke-linejoin="round" stroke-linecap="round"><circle cx="139.4" cy="994.9" r="2.3"/><path d="M137 998.9L132.8 996.1C131.9 995.5 130.9 996.3 131.3 997.2C131.5 997.7 132 998 132.5 998.3L136.7 1000.6V1003.5L134.3 1010.2C134 1011.4 135.6 1012 136.3 1011L139.3 1005.6L140.4 1007.2"/><path d="M141.8 998.9L146 996.1C146.9 995.5 147.9 996.3 147.5 997.2C147.3 997.7 146.8 998 146.3 998.3L143.4 999.9"/><path d="M141.6 1002.8L150.8 1011.8M150.8 1002.8L141.6 1011.8" stroke-linecap="butt" stroke-width="1.4"/></g>
<g fill="none" stroke="#444" stroke-width="1.4"><rect x="1153.5" y="994.5" width="17.5" height="16.5"/><path d="M1159.3 994.5V1011M1165.2 994.5V1011M1153.5 1000V1000H1171M1153.5 1005.5H1171"/></g>
<g fill="none" stroke="#444" stroke-width="1.4"><rect x="1213" y="994.5" width="19.5" height="16.5"/><rect x="1218" y="998.5" width="9.5" height="8.5"/><path d="M1220.5 1001.5H1225M1220.5 1004H1225" stroke-width="1"/></g>
<g fill="none" stroke="#444" stroke-width="1.4"><rect x="1272.5" y="994.5" width="19.5" height="16.5"/><path d="M1277.5 994.5V1002.5H1287V994.5M1282 994.5V1002.5"/></g>
<path d="M1321 1002.5H1332.5" stroke="#444" stroke-width="1.4"/>
<path d="M1341 1002.5H1488.5" stroke="#444" stroke-width="1.5"/>
<path d="M1415 998.5V1006.5" stroke="#444" stroke-width="1.5"/>
<rect x="1451.8" y="993.8" width="8.4" height="17" fill="#6e6e6e"/>
<path d="M1496 1002.5H1508M1502 996.5V1008.5" stroke="#444" stroke-width="1.4"/>
</svg>
</div>
</body></html>
